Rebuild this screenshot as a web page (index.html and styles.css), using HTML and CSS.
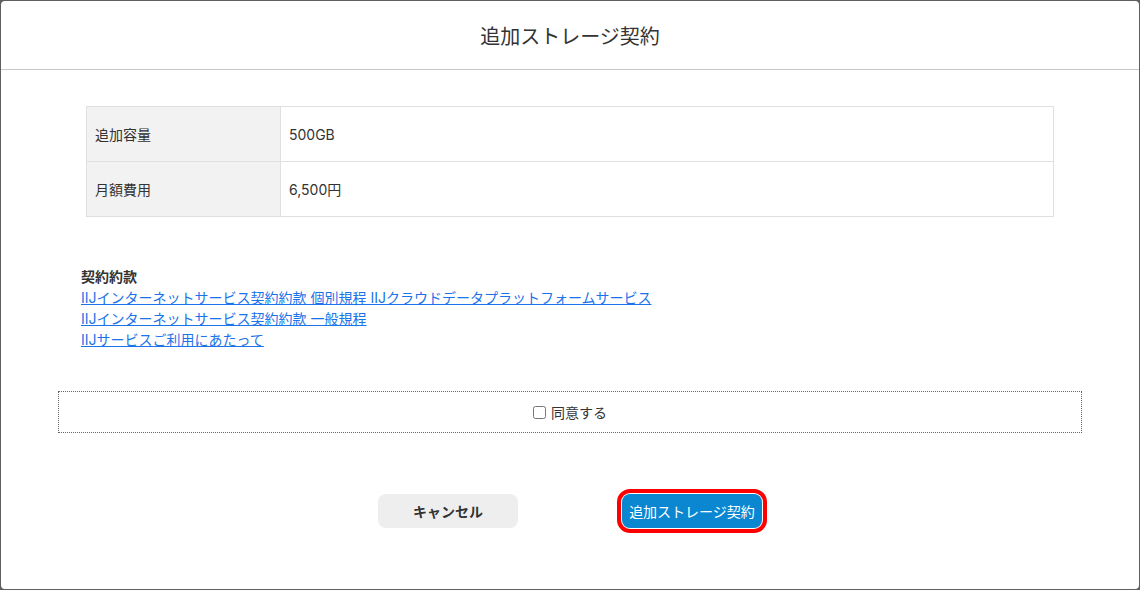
FILE: index.html
```html
<!DOCTYPE html>
<html>
<head>
    <title>追加ストレージ契約</title>
    <link rel="stylesheet" href="styles.css">
</head>
<body>
    <div class="modal">
        <div class="modal-header">
            <h1>追加ストレージ契約</h1>
        </div>

        <div class="modal-body">
            <table class="detail">
                <tr>
                    <th>追加容量</th>
                    <td>500GB</td>
                </tr>
                <tr>
                    <th>月額費用</th>
                    <td>6,500円</td>
                </tr>
            </table>

            <div class="terms">
                <p class="terms-title">契約約款</p>
                <a href="#">IIJインターネットサービス契約約款 個別規程 IIJクラウドデータプラットフォームサービス</a>
                <a href="#">IIJインターネットサービス契約約款 一般規程</a>
                <a href="#">IIJサービスご利用にあたって</a>
            </div>

            <div class="agree">
                <label><input type="checkbox" id="agree"> 同意する</label>
            </div>

            <div class="actions">
                <button type="button" class="btn btn-cancel">キャンセル</button>
                <button type="button" class="btn btn-submit">追加ストレージ契約</button>
            </div>
        </div>
    </div>
</body>
</html>
```

FILE: styles.css
```css
body {
    font-family: Inter, "Noto Sans CJK JP", sans-serif;
    background-color: #5f5f5f;
    color: #333;
    margin: 0;
    padding: 1px;
    height: 590px;
    box-sizing: border-box;
}

.modal {
    background-color: #fff;
    border-radius: 4px;
    height: 588px;
    box-sizing: border-box;
}

.modal-header {
    height: 68px;
    border-bottom: 1px solid #c8c8c8;
    display: flex;
    align-items: center;
    justify-content: center;
}

.modal-header h1 {
    margin: 0;
    font-size: 20px;
    font-weight: normal;
    color: #333;
}

.modal-body {
    padding: 36px 57px 0;
}

.detail {
    margin: 0 28px;
    width: calc(100% - 56px);
    border-collapse: collapse;
    font-size: 14px;
}

.detail th,
.detail td {
    height: 55px;
    box-sizing: border-box;
    border: 1px solid #e0e0e0;
    padding: 0 8px;
    text-align: left;
    font-weight: normal;
}

.detail th {
    width: 194px;
    background-color: #f2f2f2;
}

.terms {
    margin: 49px 0 0 23px;
    font-size: 14px;
    line-height: 21px;
}

.terms-title {
    margin: 0;
    font-weight: bold;
}

.terms a {
    display: table;
    color: #1a73e8;
}

.agree {
    margin-top: 41px;
    height: 42px;
    box-sizing: border-box;
    border: 1px dotted #666;
    display: flex;
    align-items: center;
    justify-content: center;
    font-size: 14px;
}

.agree input {
    margin: 0 1px 0 0;
    width: 13px;
    height: 13px;
    vertical-align: -1px;
}

.actions {
    margin-top: 61px;
    display: flex;
    justify-content: center;
    gap: 104px;
}

.btn {
    font-family: inherit;
    width: 140px;
    height: 34px;
    border: none;
    border-radius: 8px;
    font-size: 14px;
    cursor: pointer;
}

.btn-cancel {
    background-color: #eee;
    color: #333;
    font-weight: bold;
}

.btn-submit {
    background-color: #0b86d1;
    color: #fff;
    outline: 4px solid #f00;
    outline-offset: 1px;
}
```
